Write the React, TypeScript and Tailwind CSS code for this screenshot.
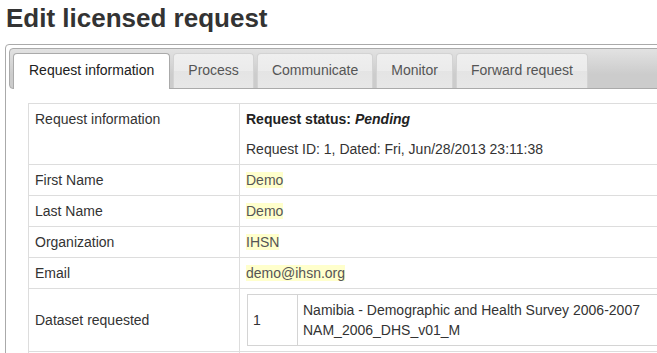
import React from "react";

const tabs = ["Request information", "Process", "Communicate", "Monitor", "Forward request"];

function Hl({ children }: { children: React.ReactNode }) {
  return <span className="bg-[#ffffcc] text-[#555]">{children}</span>;
}

export default function App() {
  return (
    <div className="w-[657px] h-[353px] overflow-hidden bg-white font-['Liberation_Sans',Arial,sans-serif] text-[#333]">
      <h1 className="text-[26px] font-bold leading-[30px] pl-[6px] pt-[3px] text-[#333]">Edit licensed request</h1>
      <div className="mt-[11px] ml-[5px] w-[800px] border border-[#aaaaaa] rounded-[4px] p-[3px] pb-0">
        <div className="border border-[#aaaaaa] rounded-[4px] bg-[linear-gradient(#e2e2e2,#cccccc_65%)] px-[3px] pt-[4px] flex items-end gap-[3px]">
          {tabs.map((t, i) =>
            i === 0 ? (
              <div
                key={t}
                className="h-[36px] -mb-[1px] border border-b-0 border-[#aaaaaa] rounded-t-[4px] bg-white px-[15px] pt-[8px] text-[14px] leading-[17px] text-[#212121]"
              >
                {t}
              </div>
            ) : (
              <div
                key={t}
                className="h-[35px] border border-b-0 border-[#d3d3d3] rounded-t-[4px] bg-[linear-gradient(#efefef,#ebebeb_50%,#e4e4e4_50%,#e7e7e7)] px-[14px] pt-[8px] text-[14px] leading-[17px] text-[#555555]"
              >
                {t}
              </div>
            )
          )}
        </div>
        <div className="pt-[14px] pl-[19px]">
          <table className="w-full table-fixed border-collapse text-[14px] leading-[20px]">
            <colgroup>
              <col className="w-[211px]" />
              <col />
            </colgroup>
            <tbody>
              <tr>
                <td className="border border-[#dddddd] px-[6px] py-[5px] align-top">Request information</td>
                <td className="border border-[#dddddd] px-[6px] py-[5px] align-top">
                  <div className="font-bold text-[#222]">
                    Request status: <i>Pending</i>
                  </div>
                  <div className="mt-[10px]">Request ID: 1, Dated: Fri, Jun/28/2013 23:11:38</div>
                </td>
              </tr>
              <tr>
                <td className="border border-[#dddddd] px-[6px] py-[5px]">First Name</td>
                <td className="border border-[#dddddd] px-[6px] py-[5px]">
                  <Hl>Demo</Hl>
                </td>
              </tr>
              <tr>
                <td className="border border-[#dddddd] px-[6px] py-[5px]">Last Name</td>
                <td className="border border-[#dddddd] px-[6px] py-[5px]">
                  <Hl>Demo</Hl>
                </td>
              </tr>
              <tr>
                <td className="border border-[#dddddd] px-[6px] py-[5px]">Organization</td>
                <td className="border border-[#dddddd] px-[6px] py-[5px]">
                  <Hl>IHSN</Hl>
                </td>
              </tr>
              <tr>
                <td className="border border-[#dddddd] px-[6px] py-[5px]">Email</td>
                <td className="border border-[#dddddd] px-[6px] py-[5px]">
                  <Hl>demo@ihsn.org</Hl>
                </td>
              </tr>
              <tr>
                <td className="border border-[#dddddd] px-[6px] py-[5px] align-middle">Dataset requested</td>
                <td className="border border-[#dddddd] px-[7px] py-[5px]">
                  <table className="w-full table-fixed border-collapse">
                    <colgroup>
                      <col className="w-[50px]" />
                      <col />
                    </colgroup>
                    <tbody>
                      <tr>
                        <td className="border border-[#d4d4d4] px-[5px] py-[5px] align-middle">1</td>
                        <td className="border border-[#d4d4d4] px-[5px] py-[5px]">
                          <div>Namibia - Demographic and Health Survey 2006-2007</div>
                          <div>NAM_2006_DHS_v01_M</div>
                        </td>
                      </tr>
                    </tbody>
                  </table>
                </td>
              </tr>
              <tr>
                <td className="border border-[#dddddd] px-[6px] py-[5px]">&nbsp;</td>
                <td className="border border-[#dddddd] px-[6px] py-[5px]">&nbsp;</td>
              </tr>
            </tbody>
          </table>
        </div>
      </div>
    </div>
  );
}
